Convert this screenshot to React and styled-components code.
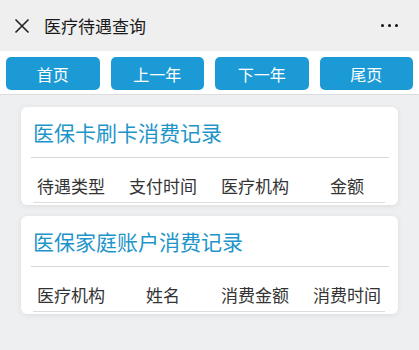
import styled, { createGlobalStyle } from "styled-components";

const GlobalStyle = createGlobalStyle`
  body {
    margin: 0;
    background: #eeeff0;
    font-family: "Noto Sans CJK SC", "Noto Sans", sans-serif;
  }
`;

const records = [
  {
    title: "医保卡刷卡消费记录",
    columns: ["待遇类型", "支付时间", "医疗机构", "金额"],
  },
  {
    title: "医保家庭账户消费记录",
    columns: ["医疗机构", "姓名", "消费金额", "消费时间"],
  },
];

const pagers = ["首页", "上一年", "下一年", "尾页"];

const App = () => {
  return (
    <>
      <GlobalStyle />
      <StNav>
        <svg width="16" height="16" viewBox="0 0 16 16">
          <path d="M1.5 1.5 L14.5 14.5 M14.5 1.5 L1.5 14.5" stroke="#222" strokeWidth="1.6" fill="none" />
        </svg>
        <StNavTitle>医疗待遇查询</StNavTitle>
        <StMore>
          <i />
          <i />
          <i />
        </StMore>
      </StNav>
      <StPager>
        {pagers.map((p) => (
          <StPageBtn key={p}>{p}</StPageBtn>
        ))}
      </StPager>
      <StContent>
        {records.map((r) => (
          <StCard key={r.title}>
            <StCardTitle>{r.title}</StCardTitle>
            <StTable>
              <StHeadRow>
                {r.columns.map((c) => (
                  <StCell key={c}>{c}</StCell>
                ))}
              </StHeadRow>
            </StTable>
          </StCard>
        ))}
      </StContent>
    </>
  );
};

const StNav = styled.div`
  height: 51px;
  background: #efefef;
  display: flex;
  align-items: center;
  padding: 0 14px;
  box-sizing: border-box;
`;

const StNavTitle = styled.div`
  margin-left: 14px;
  font-size: 17px;
  color: #1a1a1a;
  flex: 1;
`;

const StMore = styled.div`
  display: flex;
  gap: 4px;
  margin-right: 7px;
  i {
    width: 3px;
    height: 3px;
    border-radius: 50%;
    background: #111;
  }
`;

const StPager = styled.div`
  background: #fff;
  height: 44px;
  padding: 6px 6px 0;
  box-sizing: border-box;
  display: grid;
  grid-template-columns: repeat(4, 1fr);
  gap: 11px;
  border-bottom: 1px solid #dcdcdc;
`;

const StPageBtn = styled.button`
  height: 33px;
  border: none;
  border-radius: 5px;
  background: #1b9ad6;
  color: #fff;
  font-family: inherit;
  font-size: 16px;
  padding: 0;
`;

const StContent = styled.div`
  padding: 12px 21px;
  display: flex;
  flex-direction: column;
  gap: 11px;
`;

const StCard = styled.div`
  background: #fff;
  border-radius: 6px;
  box-shadow: 0 1px 6px rgba(0, 0, 0, 0.08);
  padding: 0 9px 2px 10px;
`;

const StCardTitle = styled.div`
  height: 50px;
  line-height: 50px;
  padding-left: 2px;
  font-size: 21px;
  color: #1e95c9;
  border-bottom: 1px solid #d8d8d8;
`;

const StTable = styled.div`
  margin: 0 4px 0 2px;
  border-bottom: 1px solid #dcdcdc;
`;

const StHeadRow = styled.div`
  display: grid;
  grid-template-columns: repeat(4, 1fr);
  height: 44px;
  box-sizing: border-box;
  padding-top: 16px;
  margin: 0 -8px;
`;

const StCell = styled.div`
  text-align: center;
  font-size: 17px;
  line-height: 24px;
  color: #333;
`;

export default App;
